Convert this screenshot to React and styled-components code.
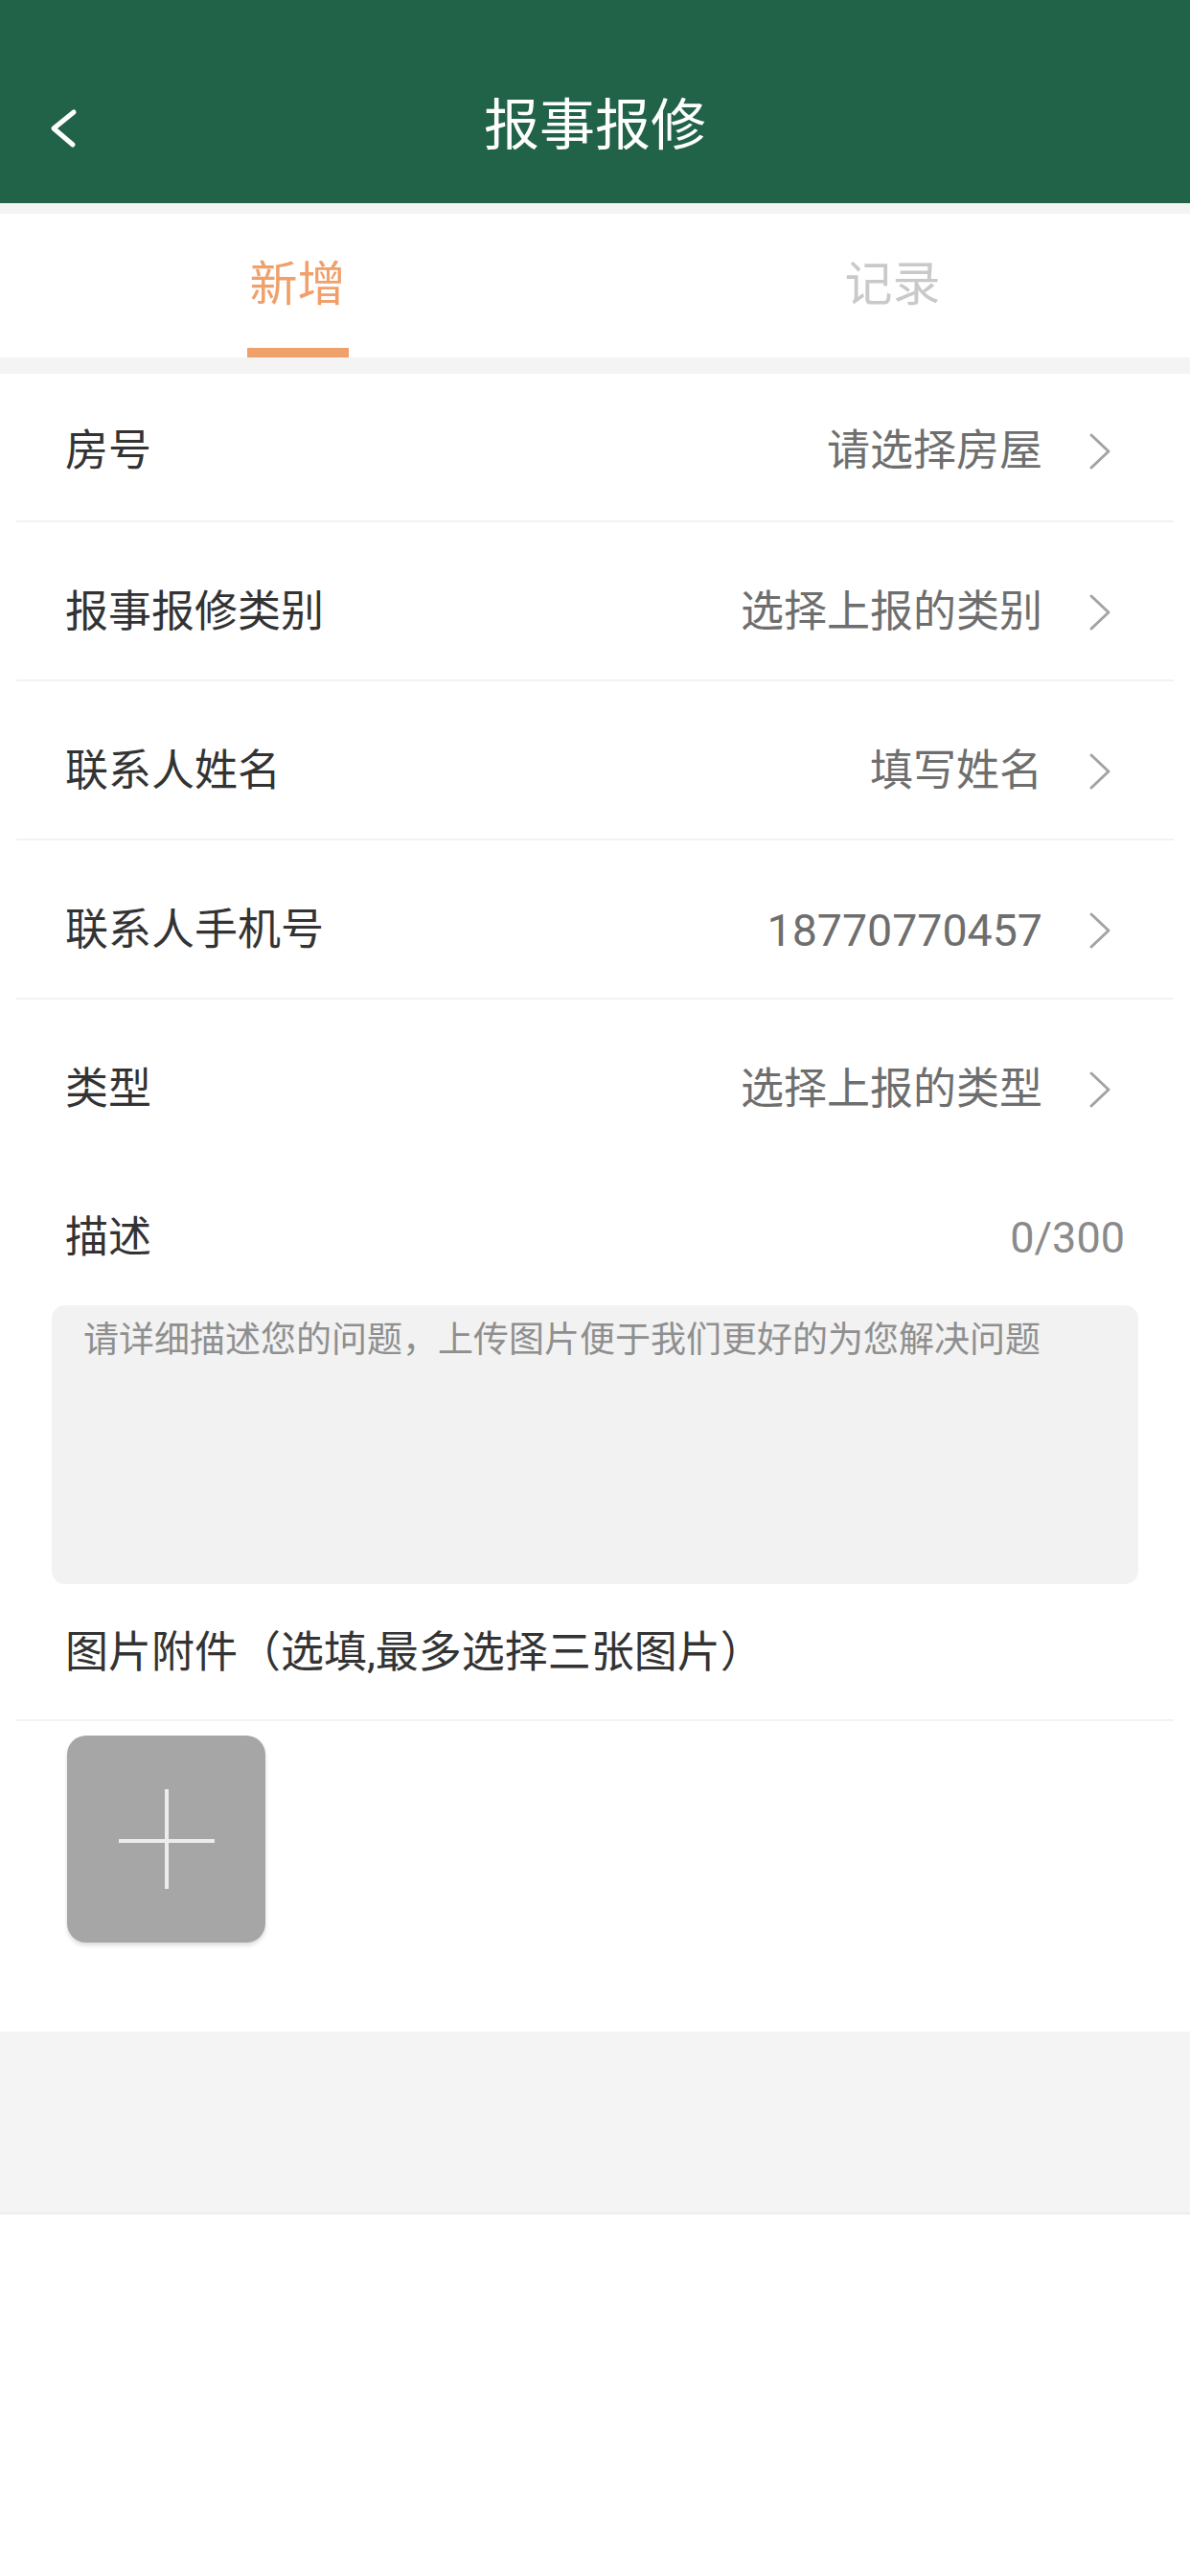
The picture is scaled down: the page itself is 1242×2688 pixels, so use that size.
import React from "react";
import styled, { createGlobalStyle } from "styled-components";

const Global = createGlobalStyle`
  html, body { margin: 0; padding: 0; background: #ffffff; }
  body { font-family: Roboto, "Noto Sans CJK SC", sans-serif; }
  * { box-sizing: border-box; }
`;

const Page = styled.div`
  width: 1242px;
  min-height: 2688px;
  background: #ffffff;
  display: flex;
  flex-direction: column;
`;

const Header = styled.header`
  height: 212px;
  background: #216349;
  padding-top: 50px;
  display: flex;
  flex-direction: column;
`;

const NavBar = styled.div`
  position: relative;
  height: 162px;
  display: flex;
  align-items: center;
  justify-content: center;
`;

const BackButton = styled.button`
  position: absolute;
  left: 48px;
  top: 50%;
  transform: translateY(-50%);
  margin-top: 2px;
  border: 0;
  padding: 0;
  background: transparent;
  display: flex;
`;

const Title = styled.h1`
  margin: 0;
  font-size: 58px;
  font-weight: 400;
  line-height: 70px;
  color: #ffffff;
`;

const Spacer = styled.div`
  height: ${(p) => p.$h}px;
  background: #f4f4f4;
`;

const Tabs = styled.nav`
  height: 150px;
  display: grid;
  grid-template-columns: 1fr 1fr;
  background: #ffffff;
`;

const Tab = styled.div`
  display: flex;
  flex-direction: column;
  align-items: center;
  padding-top: 44px;
`;

const TabText = styled.span`
  font-size: 50px;
  line-height: 60px;
  color: ${(p) => (p.$active ? "#F0A06A" : "#c9c9c9")};
`;

const TabBar = styled.div`
  margin-top: 36px;
  width: 106px;
  height: 10px;
  background: ${(p) => (p.$active ? "#F0A06A" : "transparent")};
`;

const Row = styled.div`
  height: ${(p) => p.$h}px;
  padding: ${(p) => p.$top}px 82px 0 68px;
  display: flex;
  align-items: flex-start;
  justify-content: space-between;
`;

const Label = styled.span`
  font-size: 45px;
  line-height: 60px;
  color: #333333;
`;

const ValueWrap = styled.span`
  display: flex;
  align-items: center;
  height: 60px;
  gap: 48px;
`;

const Value = styled.span`
  font-size: ${(p) => (p.$num ? 46.5 : 45)}px;
  line-height: 60px;
  color: #6e6e6e;
`;

const Divider = styled.div`
  height: 2px;
  margin: 0 17px;
  background: #f2f2f2;
`;

const DescHeader = styled.div`
  padding: 55px 68px 0 68px;
  display: flex;
  justify-content: space-between;
  align-items: center;
`;

const Counter = styled.span`
  font-size: 45px;
  line-height: 60px;
  color: #8a8a8a;
`;

const TextArea = styled.textarea`
  display: block;
  margin: 40px 54px 0 54px;
  width: calc(100% - 108px);
  height: 291px;
  border: 0;
  outline: none;
  resize: none;
  border-radius: 14px;
  background: #f2f2f2;
  padding: 12px 33px;
  font-family: Roboto, "Noto Sans CJK SC", sans-serif;
  font-size: 37px;
  line-height: 50px;
  color: #333;
  &::placeholder { color: #8f8f8f; }
`;

const PhotoLabel = styled.div`
  padding: 42px 68px 39px 68px;
  font-size: 45px;
  line-height: 60px;
  color: #333333;
`;

const Uploads = styled.div`
  padding: 15px 70px 0 70px;
  display: flex;
  gap: 20px;
`;

const AddTile = styled.button`
  width: 207px;
  height: 216px;
  border: 0;
  padding: 0;
  border-radius: 20px;
  background: #a6a6a6;
  box-shadow: 0 3px 4px rgba(0, 0, 0, 0.14);
  display: flex;
  align-items: center;
  justify-content: center;
`;

const Footer = styled.div`
  margin-top: 93px;
  height: 191px;
  background: #f4f4f4;
  border-bottom: 3px solid #efefef;
`;

const Chevron = () => (
  <svg width="24" height="40" viewBox="0 0 24 40">
    <path d="M3 3 L21 20 L3 37" fill="none" stroke="#a3a3a3" strokeWidth="3" strokeLinecap="round" strokeLinejoin="round" />
  </svg>
);

const BackIcon = () => (
  <svg width="36" height="44" viewBox="0 0 36 44">
    <path d="M29 6 L8 23 L28 40" fill="none" stroke="#ffffff" strokeWidth="5" strokeLinecap="round" strokeLinejoin="round" />
  </svg>
);

const PlusIcon = () => (
  <svg width="104" height="108" viewBox="0 0 104 108">
    <path d="M2 56 H102 M52 2 V106" stroke="#ececec" strokeWidth="4" fill="none" />
  </svg>
);

const rows = [
  { label: "房号", value: "请选择房屋" },
  { label: "报事报修类别", value: "选择上报的类别" },
  { label: "联系人姓名", value: "填写姓名" },
  { label: "联系人手机号", value: "18770770457", num: true },
  { label: "类型", value: "选择上报的类型" },
];

export default function App() {
  return (
    <Page>
      <Global />
      <Header>
        <NavBar>
          <BackButton aria-label="返回">
            <BackIcon />
          </BackButton>
          <Title>报事报修</Title>
        </NavBar>
      </Header>
      <Spacer $h={11} />
      <Tabs>
        <Tab>
          <TabText $active>新增</TabText>
          <TabBar $active />
        </Tab>
        <Tab>
          <TabText>记录</TabText>
          <TabBar />
        </Tab>
      </Tabs>
      <Spacer $h={17} />
      {rows.map((r, i) => (
        <React.Fragment key={r.label}>
          <Row $h={i === 0 ? 153 : 164} $top={i === 0 ? 51 : 64}>
            <Label>{r.label}</Label>
            <ValueWrap>
              <Value $num={r.num}>{r.value}</Value>
              <Chevron />
            </ValueWrap>
          </Row>
          {i < rows.length - 1 && <Divider />}
        </React.Fragment>
      ))}
      <DescHeader>
        <Label>描述</Label>
        <Counter>0/300</Counter>
      </DescHeader>
      <TextArea placeholder="请详细描述您的问题，上传图片便于我们更好的为您解决问题" />
      <PhotoLabel>图片附件（选填,最多选择三张图片）</PhotoLabel>
      <Divider />
      <Uploads>
        <AddTile aria-label="添加图片">
          <PlusIcon />
        </AddTile>
      </Uploads>
      <Footer />
    </Page>
  );
}
